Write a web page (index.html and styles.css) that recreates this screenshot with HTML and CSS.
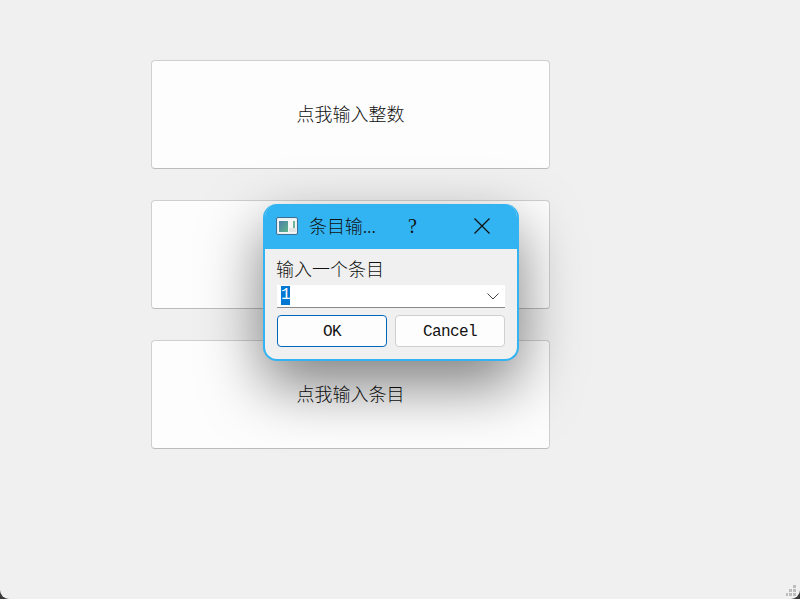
FILE: index.html
```html
<!DOCTYPE html>
<html lang="zh-CN">
<head>
<meta charset="utf-8">
<title>输入对话框</title>
<link rel="stylesheet" href="styles.css">
</head>
<body>
<main class="window">
  <div class="actions">
    <button class="action"><span class="action-label">点我输入整数</span></button>
    <button class="action" aria-label="第二个输入按钮"></button>
    <button class="action"><span class="action-label">点我输入条目</span></button>
  </div>

  <section class="dialog">
    <header class="titlebar">
      <svg class="app-icon" width="22" height="18" viewBox="0 0 22 18">
        <defs>
          <linearGradient id="pane" x1="0" y1="0" x2="1" y2="1">
            <stop offset="0" stop-color="#4d7fa8"/>
            <stop offset="1" stop-color="#5fb489"/>
          </linearGradient>
        </defs>
        <rect x="0.5" y="0.5" width="21" height="17" rx="1.5" fill="#e9eef2" stroke="#3f6f92"/>
        <rect x="2" y="2" width="18" height="14" fill="#f4f6f6"/>
        <rect x="3" y="4" width="9" height="11" fill="url(#pane)"/>
        <rect x="17" y="4" width="2" height="7" fill="#6fb59a"/>
        <rect x="13" y="11" width="7" height="4" fill="#e2e4e4"/>
      </svg>
      <span class="title">条目输...</span>
      <span class="help">?</span>
      <svg class="close" width="18" height="18" viewBox="0 0 18 18">
        <path d="M1.5 1.5 L16.5 16.5 M16.5 1.5 L1.5 16.5" stroke="#111" stroke-width="1.3" fill="none"/>
      </svg>
    </header>
    <div class="dialog-body">
      <label class="prompt">输入一个条目</label>
      <div class="combo">
        <span class="selected">1</span>
        <svg class="chevron" width="12" height="7" viewBox="0 0 12 7">
          <path d="M0.5 0.5 L6 6 L11.5 0.5" stroke="#444" stroke-width="1" fill="none"/>
        </svg>
      </div>
      <div class="buttons">
        <button class="dlg-btn default"><span class="btn-label">OK</span></button>
        <button class="dlg-btn"><span class="btn-label">Cancel</span></button>
      </div>
    </div>
  </section>

  <svg class="grip" width="11" height="12" viewBox="0 0 11 12">
    <g fill="#bdbdbd">
      <rect x="7" y="0" width="3" height="3"/>
      <rect x="3" y="4" width="3" height="3"/>
      <rect x="7" y="4" width="3" height="3"/>
      <rect x="0" y="8" width="2" height="3"/>
      <rect x="3" y="8" width="3" height="3"/>
      <rect x="7" y="8" width="3" height="3"/>
    </g>
  </svg>
</main>
</body>
</html>
```

FILE: styles.css
```css
html, body {
  margin: 0;
  height: 100%;
  overflow: hidden;
  background: #3a3a3a;
}

.window {
  position: relative;
  height: 599px;
  box-sizing: border-box;
  padding: 60px 0 0 151px;
  background: #f0f0f0;
  border-radius: 0 0 9px 9px;
  overflow: hidden;
  font-family: "Liberation Mono", "Noto Sans CJK SC", monospace;
  color: #111;
}

.actions {
  display: flex;
  flex-direction: column;
  gap: 31px;
  width: 399px;
}

.action {
  height: 109px;
  padding: 0 0 4px;
  background: #fdfdfd;
  border: 1px solid #cfcfcf;
  border-bottom-color: #bcbcbc;
  border-radius: 4px;
  font: inherit;
  font-weight: 300;
  font-size: 18px;
  color: #111;
}

.dialog {
  position: absolute;
  left: 263px;
  top: 204px;
  width: 256px;
  height: 157px;
  box-sizing: border-box;
  display: flex;
  flex-direction: column;
  background: #f0f0f0;
  border: 2px solid #33b4f2;
  border-top: 0;
  border-radius: 14px;
  box-shadow: 0 24px 60px rgba(0, 0, 0, 0.5);
  overflow: hidden;
}

.titlebar {
  flex: none;
  height: 45px;
  display: flex;
  align-items: center;
  padding-left: 11px;
  background: #33b4f2;
  font-family: "Noto Sans CJK SC", sans-serif;
  font-size: 18px;
  color: #111;
}

.app-icon {
  flex: none;
  margin-top: -2px;
}

.title {
  margin-top: -4px;
  margin-left: 11px;
  width: 96px;
  line-height: 24px;
  letter-spacing: -0.1px;
  font-weight: 300;
  white-space: nowrap;
}

.help {
  width: 12px;
  margin-left: 3px;
  font-family: "Liberation Serif", serif;
  font-size: 20px;
  font-weight: 400;
}

.close {
  margin-left: 53px;
  margin-top: -1px;
}

.dialog-body {
  display: flex;
  flex-direction: column;
  padding: 7px 12px 0 11px;
}

.prompt {
  height: 24px;
  line-height: 24px;
  font-size: 18px;
  font-family: "Noto Sans CJK SC", sans-serif;
  font-weight: 300;
  white-space: nowrap;
  color: #111;
}

.combo {
  margin-top: 5px;
  margin-left: 1px;
  height: 23px;
  box-sizing: border-box;
  display: flex;
  align-items: center;
  justify-content: space-between;
  padding: 0 6px 2px 4px;
  background: #fff;
  border-bottom: 1px solid #8a8a8a;
  font-size: 16px;
}

.selected {
  background: #0078d4;
  color: #fff;
  width: 9px;
  height: 19px;
  line-height: 19px;
  letter-spacing: -0.6px;
}

.chevron {
  margin-top: 3px;
}

.buttons {
  display: flex;
  gap: 8px;
  margin-top: 7px;
  margin-left: 1px;
}

.dlg-btn {
  width: 110px;
  height: 32px;
  padding: 1px 0 0;
  background: #fdfdfd;
  border: 1px solid #cfcfcf;
  border-radius: 4px;
  font: inherit;
  font-size: 16px;
  letter-spacing: -0.6px;
  color: #111;
}

.dlg-btn.default {
  border-color: #0067c0;
}

.grip {
  position: absolute;
  right: 3px;
  bottom: 2px;
}
```
